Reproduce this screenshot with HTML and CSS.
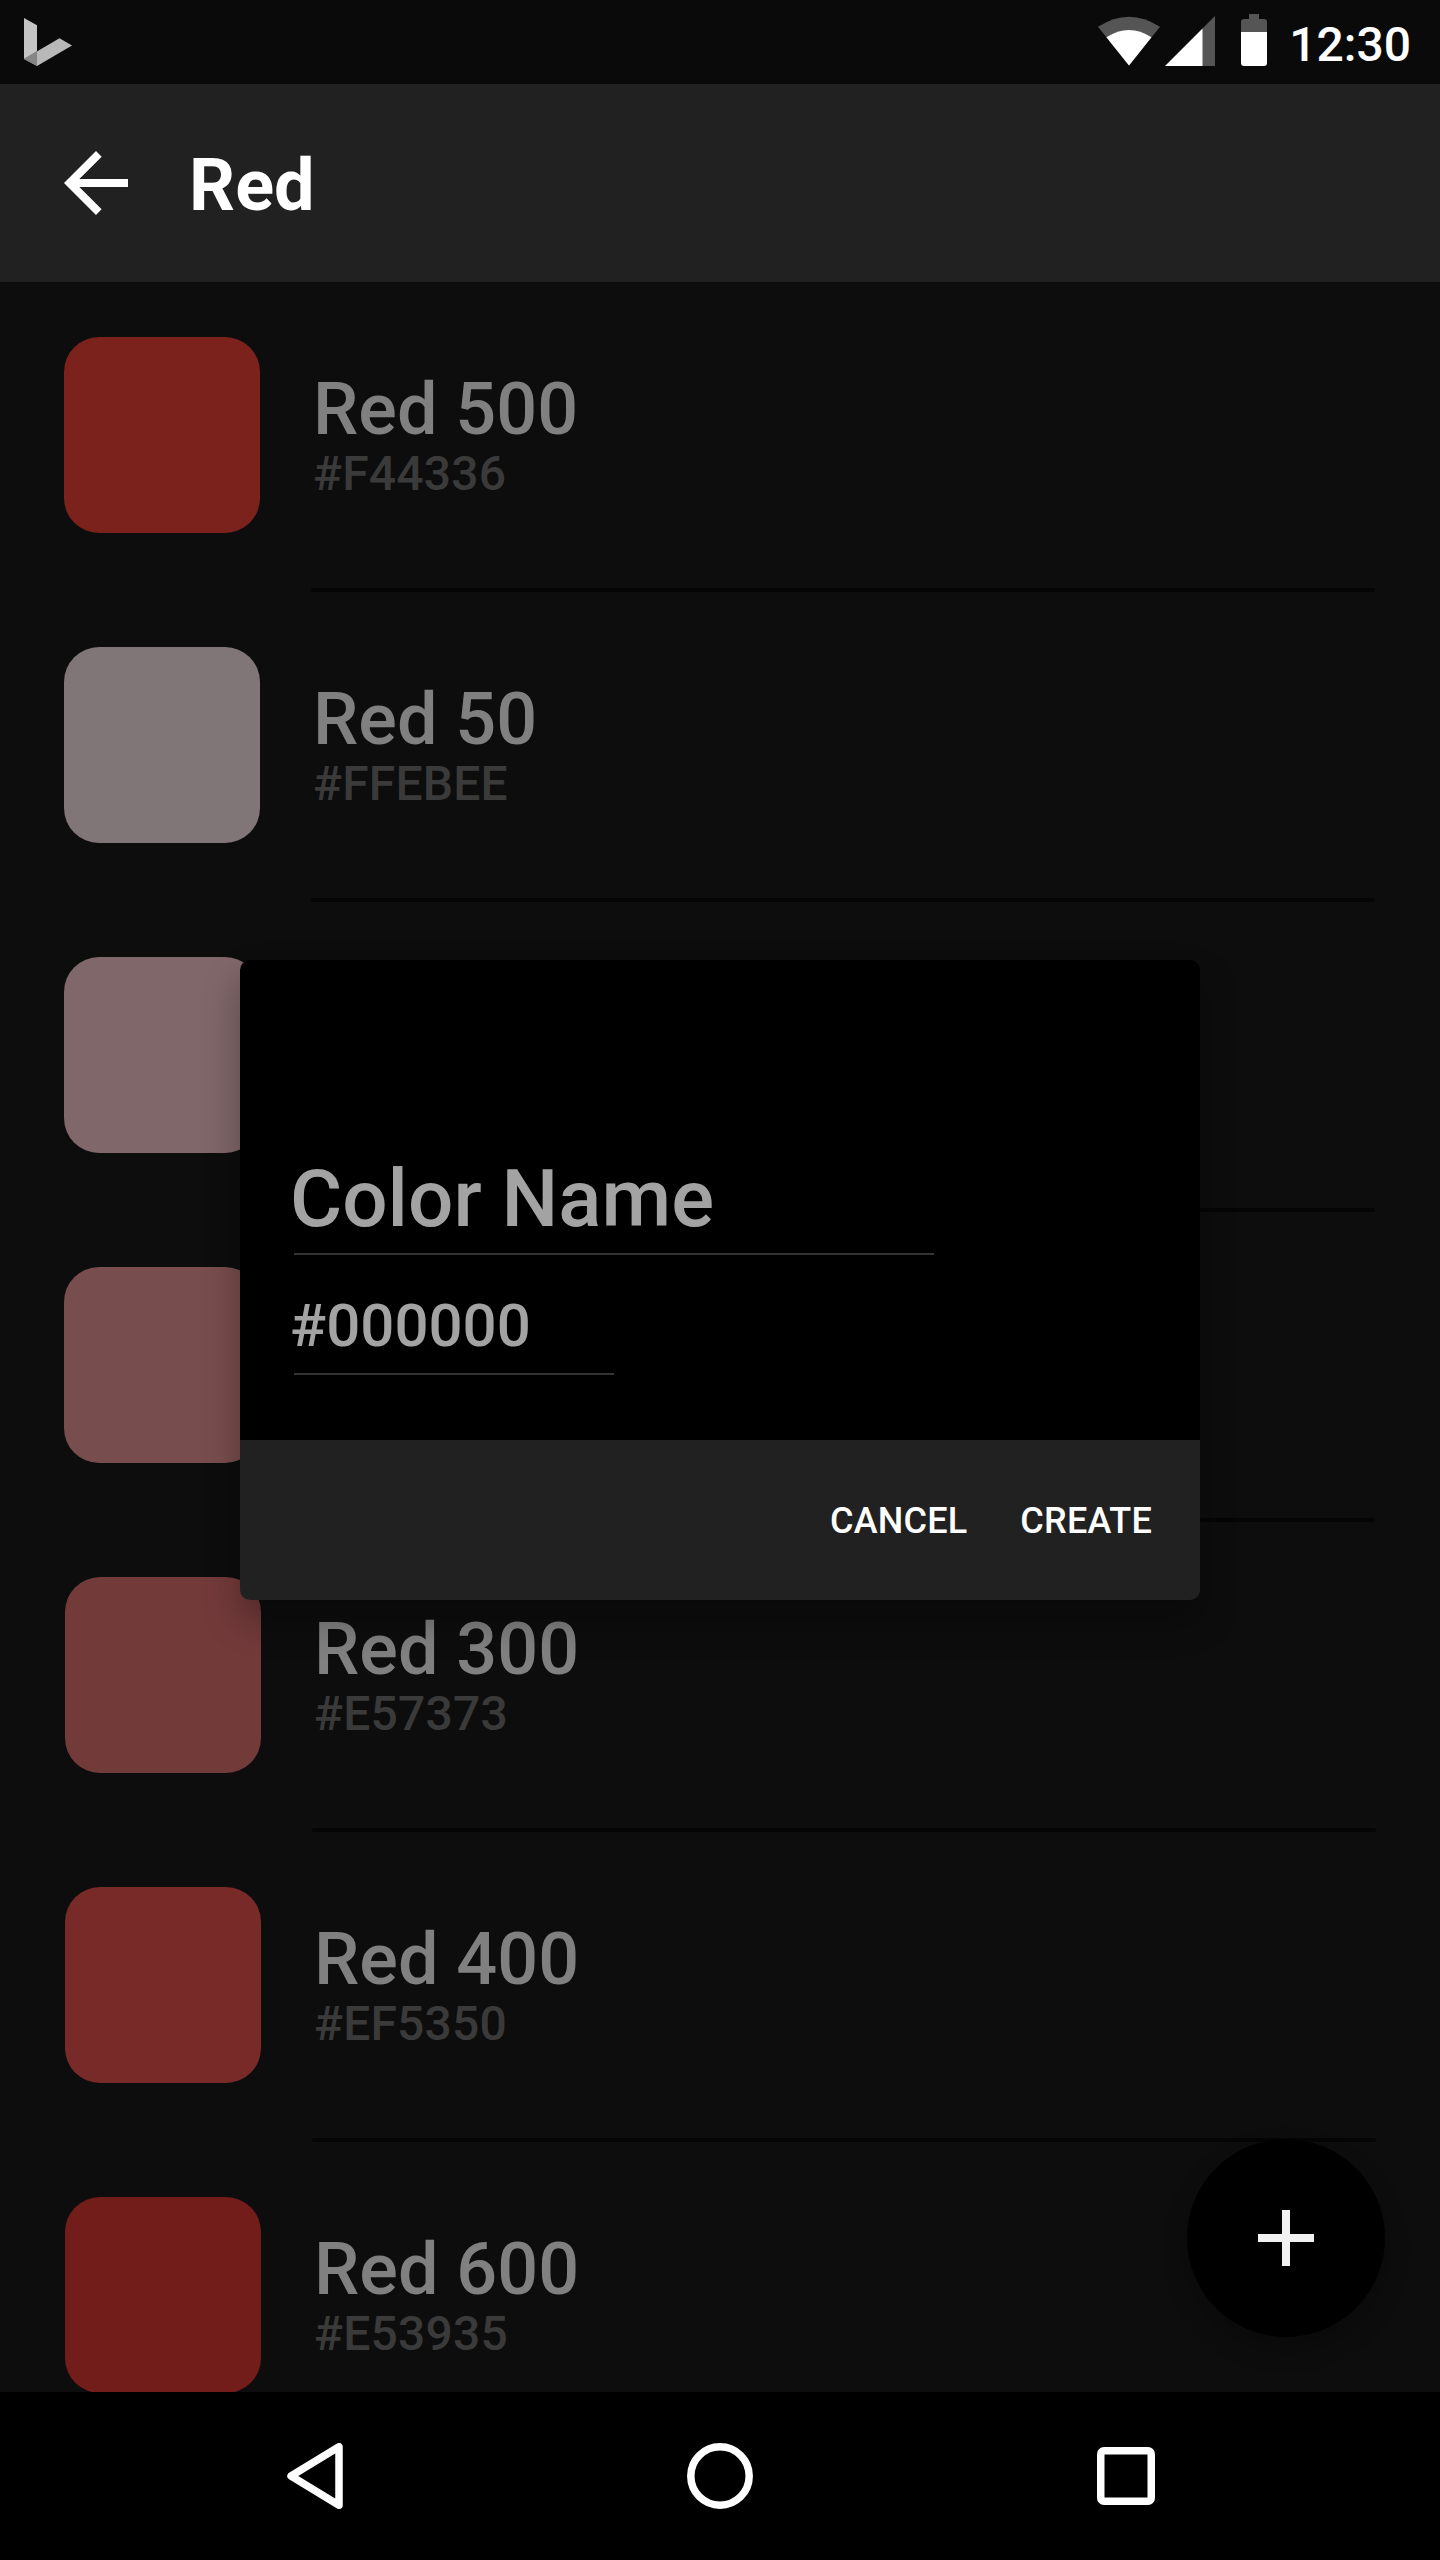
FILE: index.html
```html
<!DOCTYPE html>
<html lang="en">
<head>
<meta charset="utf-8">
<title>Red</title>
<link rel="stylesheet" href="styles.css">
</head>
<body>
<div class="screen">
  <header class="status-bar">
    <svg class="app-mark" width="48" height="48" viewBox="0 0 48 48">
      <path fill="#c4c4c4" d="M0 0l13 7.300v26L0 41z"/>
      <path fill="#b8b8b8" d="M0 41L35.500 20.300 48 27.500 13 48z"/>
      <path fill="#858585" d="M0 41l13-7.600V48z"/>
    </svg>
    <div class="status-icons">
      <svg class="wifi" width="62" height="50" viewBox="0 0 62 50">
        <path fill="#555" d="M0 10.800Q31-9.500 62 10.800L31 49.500z"/>
        <path fill="#fff" d="M8.400 21.300Q31 6.500 53.500 21.300L31 49.500z"/>
      </svg>
      <svg class="cell" width="50" height="50" viewBox="0 0 50 50">
        <path fill="#555" d="M50 0v50H37V13z"/>
        <path fill="#fff" d="M0 50l37.500-37.500V50z"/>
      </svg>
      <svg class="battery" width="26" height="52" viewBox="0 0 26 52">
        <path fill="#555" d="M8 0h10v5h5a3 3 0 0 1 3 3v10H0V8a3 3 0 0 1 3-3h5z"/>
        <path fill="#fff" d="M0 18h26v31a3 3 0 0 1-3 3H3a3 3 0 0 1-3-3z"/>
      </svg>
      <span class="clock">12:30</span>
    </div>
  </header>
  <div class="app-bar">
    <svg class="back" width="64" height="64" viewBox="0 0 16 16" fill="#fff">
      <path d="M16 7H3.830l5.590-5.590L8 0 0 8l8 8 1.410-1.410L3.830 9H16z"/>
    </svg>
    <h1 class="title">Red</h1>
  </div>
  <main class="list">
    <div class="row"><div class="swatch red-500"></div><div class="info"><div class="name">Red 500</div><div class="hex">#F44336</div></div></div>
    <div class="row"><div class="swatch red-50"></div><div class="info"><div class="name">Red 50</div><div class="hex">#FFEBEE</div></div></div>
    <div class="row"><div class="swatch red-100"></div><div class="info"></div></div>
    <div class="row"><div class="swatch red-200"></div><div class="info"></div></div>
    <div class="row inset"><div class="swatch red-300"></div><div class="info"><div class="name">Red 300</div><div class="hex">#E57373</div></div></div>
    <div class="row inset"><div class="swatch red-400"></div><div class="info"><div class="name">Red 400</div><div class="hex">#EF5350</div></div></div>
    <div class="row inset"><div class="swatch red-600"></div><div class="info"><div class="name">Red 600</div><div class="hex">#E53935</div></div></div>
  </main>
  <nav class="nav-bar">
    <svg width="60" height="66" viewBox="0 0 60 66" fill="none" stroke="#fff" stroke-width="7.500" stroke-linejoin="round"><path d="M52 3.800v58.400L4 33z"/></svg>
    <svg width="66" height="66" viewBox="0 0 66 66" fill="none" stroke="#fff" stroke-width="7.500"><circle cx="33" cy="33" r="29.200"/></svg>
    <svg width="58" height="58" viewBox="0 0 58 58"><path fill="#fff" fill-rule="evenodd" d="M7 0h44a7 7 0 0 1 7 7v44a7 7 0 0 1-7 7H7a7 7 0 0 1-7-7V7a7 7 0 0 1 7-7zM7.500 7.500v43h43v-43z"/></svg>
  </nav>
  <button class="fab" aria-label="Add">
    <svg width="56" height="56" viewBox="0 0 56 56" fill="#f2f2f2"><path d="M24 0h8v24h24v8H32v24h-8V32H0v-8h24z"/></svg>
  </button>
  <section class="dialog">
    <div class="fields">
      <div class="field field-name">Color Name</div>
      <div class="field field-hex">#000000</div>
    </div>
    <div class="actions"><span>CANCEL</span><span>CREATE</span></div>
  </section>
</div>
</body>
</html>
```
FILE: styles.css
```css
* { box-sizing: border-box; }
body { margin: 0; background: #0d0d0d; font-family: Roboto, sans-serif; font-weight: 500; }
svg { display: block; flex: none; }
.screen { position: relative; width: 1440px; height: 2560px; display: flex; flex-direction: column; overflow: hidden; }

.status-bar { height: 84px; flex: none; background: #0a0a0a; display: flex; justify-content: space-between; align-items: flex-start; padding: 0 29px 0 24px; }
.app-mark { margin-top: 18px; }
.status-icons { display: flex; align-items: flex-start; color: #fff; }
.wifi { margin: 16px 5px 0 0; }
.cell { margin: 16px 26px 0 0; }
.battery { margin: 14px 22px 0 0; }
.clock { font-size: 48px; line-height: 56px; margin-top: 17px; }

.app-bar { height: 198px; flex: none; background: #212121; color: #fff; display: flex; align-items: center; padding: 0 64px; gap: 61px; }
.title { margin: 0; padding-top: 6px; font-size: 72px; font-weight: 700; line-height: 84px; }

.list { height: 2110px; flex: none; overflow: hidden; }
.row { height: 310px; display: flex; padding: 0 65px 0 64px; gap: 51px; }
.row.inset { padding: 0 64px 0 65px; }
.swatch { width: 196px; height: 196px; margin-top: 55px; border-radius: 35px; flex: none; }
.info { flex: 1; position: relative; padding: 89px 0 0 2px; }
.info::after { content: ""; position: absolute; left: 0; right: 0; bottom: 0; height: 4px; border-radius: 2px; background: #050505; }
.name { font-size: 72px; line-height: 78px; color: #808080; }
.hex { font-size: 48px; line-height: 50px; letter-spacing: .2px; color: #3a3a3a; }
.red-500 { background: #7a221b; }
.red-50 { background: #807677; }
.red-100 { background: #806769; }
.red-200 { background: #784d4d; }
.red-300 { background: #733a3a; }
.red-400 { background: #782a28; }
.red-600 { background: #731d1b; }

.nav-bar { height: 168px; flex: none; background: #000; display: grid; grid-template-columns: 400px 66px 400px; justify-content: center; align-items: center; }
.nav-bar svg:last-child { margin-left: 344px; }

.fab { position: absolute; left: 1187px; top: 2139px; width: 198px; height: 198px; border: 0; border-radius: 50%; padding: 0; background: #000; display: flex; align-items: center; justify-content: center; box-shadow: 0 12px 24px rgba(0,0,0,.25); }

.dialog { position: absolute; left: 240px; top: 960px; width: 960px; height: 640px; border-radius: 10px; overflow: hidden; box-shadow: 0 20px 36px rgba(0,0,0,.3); display: flex; flex-direction: column; }
.fields { flex: 1; background: #000; padding: 192px 54px 0; color: #a3a3a3; }
.field { border-bottom: 2px solid #333; text-indent: -4px; }
.field-name { width: 640px; height: 103px; font-size: 80px; line-height: 94px; }
.field-hex { width: 320px; height: 120px; font-size: 60px; line-height: 70px; padding-top: 36px; }
.actions { height: 160px; flex: none; background: #212121; color: #fff; font-size: 36px; line-height: 42px; letter-spacing: .2px; display: flex; justify-content: flex-end; align-items: center; gap: 53px; padding: 2px 48px 0 0; }
```
